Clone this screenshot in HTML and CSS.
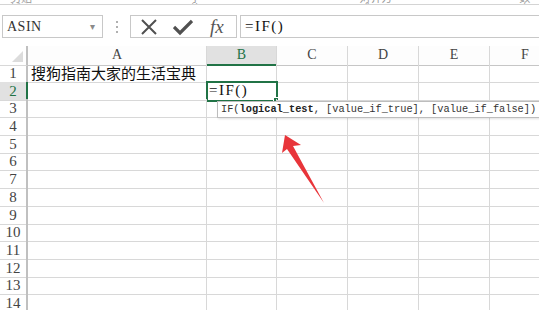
FILE: index.html
```html
<!DOCTYPE html>
<html lang="zh-CN">

<head>
    <meta charset="UTF-8">
    <meta name="viewport" content="width=device-width, initial-scale=1.0">
    <title>Excel IF</title>
    <link rel="stylesheet" href="styles.css">
</head>

<body>
    <div class="sheet">

        <div class="ribbon-edge">
            <span class="ribbon-label">剪贴板</span>
            <span class="ribbon-label wide">字体</span>
            <span class="ribbon-label wide">对齐方式</span>
            <span class="ribbon-label">数字</span>
        </div>

        <div class="formula-bar">
            <div class="name-box">
                <span>ASIN</span>
                <span class="drop">&#9662;</span>
            </div>
            <div class="grip"><i></i><i></i><i></i></div>
            <div class="fx-buttons">
                <svg class="btn-icon" width="18" height="18" viewBox="0 0 18 18">
                    <path d="M2 2 L16 16 M16 2 L2 16" stroke="#505050" stroke-width="2" fill="none" />
                </svg>
                <svg class="btn-icon" width="20" height="18" viewBox="0 0 20 18">
                    <path d="M1 9 L7 15 L19 3" stroke="#505050" stroke-width="3.2" fill="none" />
                </svg>
                <span class="fx">fx</span>
            </div>
            <div class="formula-input">=IF()</div>
        </div>

        <div class="grid">
            <div class="row head">
                <div class="corner"><span class="corner-mark"></span></div>
                <div class="col">A</div>
                <div class="col active">B</div>
                <div class="col">C</div>
                <div class="col">D</div>
                <div class="col">E</div>
                <div class="col">F</div>
            </div>
            <div class="row">
                <div class="num">1</div>
                <div class="cell cn">搜狗指南大家的生活宝典</div>
                <div class="cell"></div><div class="cell"></div><div class="cell"></div><div class="cell"></div><div class="cell"></div>
            </div>
            <div class="row">
                <div class="num active">2</div>
                <div class="cell"></div>
                <div class="cell current">=IF()</div>
                <div class="cell"></div><div class="cell"></div><div class="cell"></div><div class="cell"></div>
            </div>
            <div class="row">
                <div class="num">3</div>
                <div class="cell"></div><div class="cell"></div><div class="cell"></div><div class="cell"></div><div class="cell"></div><div class="cell"></div>
            </div>
            <div class="row">
                <div class="num">4</div>
                <div class="cell"></div><div class="cell"></div><div class="cell"></div><div class="cell"></div><div class="cell"></div><div class="cell"></div>
            </div>
            <div class="row">
                <div class="num">5</div>
                <div class="cell"></div><div class="cell"></div><div class="cell"></div><div class="cell"></div><div class="cell"></div><div class="cell"></div>
            </div>
            <div class="row">
                <div class="num">6</div>
                <div class="cell"></div><div class="cell"></div><div class="cell"></div><div class="cell"></div><div class="cell"></div><div class="cell"></div>
            </div>
            <div class="row">
                <div class="num">7</div>
                <div class="cell"></div><div class="cell"></div><div class="cell"></div><div class="cell"></div><div class="cell"></div><div class="cell"></div>
            </div>
            <div class="row">
                <div class="num">8</div>
                <div class="cell"></div><div class="cell"></div><div class="cell"></div><div class="cell"></div><div class="cell"></div><div class="cell"></div>
            </div>
            <div class="row">
                <div class="num">9</div>
                <div class="cell"></div><div class="cell"></div><div class="cell"></div><div class="cell"></div><div class="cell"></div><div class="cell"></div>
            </div>
            <div class="row">
                <div class="num">10</div>
                <div class="cell"></div><div class="cell"></div><div class="cell"></div><div class="cell"></div><div class="cell"></div><div class="cell"></div>
            </div>
            <div class="row">
                <div class="num">11</div>
                <div class="cell"></div><div class="cell"></div><div class="cell"></div><div class="cell"></div><div class="cell"></div><div class="cell"></div>
            </div>
            <div class="row">
                <div class="num">12</div>
                <div class="cell"></div><div class="cell"></div><div class="cell"></div><div class="cell"></div><div class="cell"></div><div class="cell"></div>
            </div>
            <div class="row">
                <div class="num">13</div>
                <div class="cell"></div><div class="cell"></div><div class="cell"></div><div class="cell"></div><div class="cell"></div><div class="cell"></div>
            </div>
            <div class="row">
                <div class="num">14</div>
                <div class="cell"></div><div class="cell"></div><div class="cell"></div><div class="cell"></div><div class="cell"></div><div class="cell"></div>
            </div>
        </div>

        <!-- function tooltip under the active cell -->
        <div class="func-tip">IF(<b>logical_test</b>, [value_if_true], [value_if_false])</div>

        <!-- red annotation arrow -->
        <svg class="arrow" width="539" height="310" viewBox="0 0 539 310">
            <polygon points="285,135 301,145 293,146 324,203 287,149 282,153" fill="#e8353a" />
        </svg>

    </div>
</body>

</html>
```

FILE: styles.css
```css
body {
    margin: 0;
    width: 539px;
    height: 310px;
    overflow: hidden;
    background: #ffffff;
    font-family: "Liberation Serif", serif;
    color: #222;
}

.sheet {
    position: relative;
    width: 539px;
    height: 310px;
    overflow: hidden;
}

/* bottom edge of the ribbon, labels cut off */
.ribbon-edge {
    display: flex;
    height: 4px;
    overflow: hidden;
    border-bottom: 1px solid #d4d4d4;
    padding-left: 10px;
    gap: 120px;
}

.ribbon-label {
    font-family: "Noto Sans CJK SC", sans-serif;
    font-size: 11px;
    line-height: 11px;
    margin-top: -8px;
    color: #9a9a9a;
}

.ribbon-label.wide {
    margin-left: 30px;
}

.formula-bar {
    display: flex;
    align-items: center;
    height: 23px;
    margin-top: 10px;
    padding-left: 2px;
}

.name-box {
    display: flex;
    align-items: center;
    justify-content: space-between;
    box-sizing: border-box;
    width: 101px;
    height: 23px;
    border: 1px solid #c8c8c8;
    padding: 0 7px 0 4px;
    font-size: 14px;
    letter-spacing: 0.5px;
    color: #333;
}

.drop {
    font-size: 10px;
    color: #8a8a8a;
}

.grip {
    display: flex;
    flex-direction: column;
    gap: 3px;
    width: 27px;
    align-items: center;
}

.grip i {
    display: block;
    width: 2px;
    height: 2px;
    background: #b0b0b0;
}

.fx-buttons {
    display: flex;
    align-items: center;
    box-sizing: border-box;
    width: 107px;
    height: 23px;
    border: 1px solid #c8c8c8;
    padding-left: 9px;
    gap: 15px;
}

.fx {
    font-family: "Liberation Serif", serif;
    font-style: italic;
    font-size: 19px;
    color: #555;
    margin-left: 2px;
}

.formula-input {
    flex: 1;
    box-sizing: border-box;
    height: 23px;
    margin-left: 3px;
    border: 1px solid #c8c8c8;
    border-right: none;
    padding-left: 4px;
    font-size: 15px;
    letter-spacing: 1.5px;
    line-height: 21px;
    color: #111;
}

.grid {
    margin-top: 8px;
}

.row {
    display: grid;
    grid-template-columns: 28px 179px 70px 71px 71px 71px 71px;
    height: 17.7px;
}

.row.head {
    height: 18px;
}

.row > div {
    box-sizing: border-box;
    border-right: 1px solid #d8d8d8;
    border-bottom: 1px solid #d8d8d8;
}

.corner {
    position: relative;
    border-right: 2px solid #c0c0c0 !important;
}

.corner-mark {
    position: absolute;
    right: 3px;
    bottom: 3px;
    width: 0;
    height: 0;
    border-left: 11px solid transparent;
    border-bottom: 11px solid #dcdcdc;
}

.col {
    text-align: center;
    font-size: 14px;
    line-height: 18px;
    color: #444;
    background: #fdfdfd;
    border-bottom-color: #c6c6c6 !important;
}

.col.active {
    background: #e1e1e1;
    color: #217346;
    border-bottom: 2px solid #217346 !important;
}

.num {
    text-align: center;
    font-size: 15px;
    line-height: 18px;
    color: #444;
    border-right: 2px solid #c0c0c0 !important;
}

.num.active {
    background: #e1e1e1;
    color: #217346;
    border-right: 2px solid #217346 !important;
}

.cell {
    position: relative;
    font-size: 15px;
    line-height: 17px;
    white-space: nowrap;
}

.cell.cn {
    font-family: "Noto Sans CJK SC", sans-serif;
    font-size: 15px;
    padding-left: 3px;
    color: #111;
}

.cell.current {
    padding-left: 2px;
    outline: 2px solid #217346;
    outline-offset: -1px;
    letter-spacing: 1.5px;
    color: #111;
}

.cell.current::after {
    content: "";
    position: absolute;
    right: -3px;
    bottom: -3px;
    width: 4px;
    height: 4px;
    background: #217346;
    border: 1px solid #fff;
}

.func-tip {
    position: absolute;
    left: 217px;
    top: 101px;
    box-sizing: border-box;
    width: 330px;
    height: 17px;
    padding-left: 3px;
    background: #fff;
    border: 1px solid #bdbdbd;
    box-shadow: 1px 1px 2px rgba(0, 0, 0, 0.12);
    font-family: "Liberation Mono", monospace;
    font-size: 10.3px;
    line-height: 15px;
    color: #333;
    white-space: nowrap;
}

.func-tip b {
    color: #222;
}

.arrow {
    position: absolute;
    left: 0;
    top: 0;
    pointer-events: none;
}
```
